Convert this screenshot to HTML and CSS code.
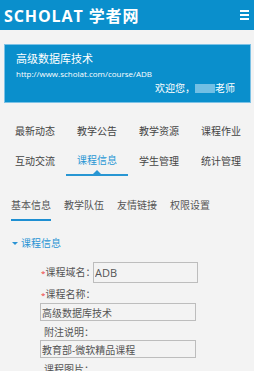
FILE: index.html
```html
<!DOCTYPE html>
<html lang="zh-CN">
<head>
  <meta charset="UTF-8" />
  <meta name="viewport" content="width=device-width, initial-scale=1.0"/>
  <title>课程信息 | SCHOLAT 学者网</title>
  <link rel="stylesheet" href="styles.css">
</head>

<body>
  <header class="topbar">
    <span class="brand">SCHOLAT 学者网</span>
    <span class="menu-btn"><i></i><i></i><i></i></span>
  </header>

  <section class="course-card">
    <h1>高级数据库技术</h1>
    <p class="course-url">http://www.scholat.com/course/ADB</p>
    <p class="welcome">欢迎您，<span class="blur-name"></span>老师</p>
  </section>

  <nav class="course-nav">
    <a href="#">最新动态</a>
    <a href="#">教学公告</a>
    <a href="#">教学资源</a>
    <a href="#">课程作业</a>
    <a href="#">互动交流</a>
    <a href="#" class="active">课程信息</a>
    <a href="#">学生管理</a>
    <a href="#">统计管理</a>
  </nav>

  <div class="sub-tabs">
    <a href="#" class="active">基本信息</a>
    <a href="#">教学队伍</a>
    <a href="#">友情链接</a>
    <a href="#">权限设置</a>
  </div>

  <h2 class="section-title"><span class="caret"></span>课程信息</h2>

  <form class="info-form">
    <div class="inline-row">
      <label class="inline-label"><span class="req">*</span>课程域名：</label>
      <input type="text" class="field short" value="ADB" />
    </div>
    <label class="block-label req-label"><span class="req">*</span>课程名称：</label>
    <input type="text" class="field wide" value="高级数据库技术" />
    <label class="block-label">附注说明：</label>
    <input type="text" class="field wide" value="教育部-微软精品课程" />
    <label class="block-label">课程图片：</label>
  </form>
</body>
</html>
```

FILE: styles.css
```css
* {
  margin: 0;
  padding: 0;
  box-sizing: border-box;
}

body {
  background: #f3f3f3;
  font-family: "Open Sans", "Noto Sans CJK SC", sans-serif;
  color: #444;
  font-size: 10px;
}

a {
  text-decoration: none;
  color: inherit;
}

.topbar {
  height: 30px;
  background: #0a8fcc;
  color: #fff;
  display: flex;
  align-items: center;
  justify-content: space-between;
  padding: 0 5px 0 4px;
}

.brand {
  font-size: 16px;
  font-weight: bold;
  letter-spacing: 0.9px;
}

.menu-btn {
  display: flex;
  flex-direction: column;
  gap: 2px;
  width: 9px;
}

.menu-btn i {
  display: block;
  height: 2px;
  background: #fff;
}

.course-card {
  margin: 14px 3px 0 4px;
  height: 59px;
  background: #0a8fcc;
  border: 1px solid #7cc2e6;
  color: #fff;
  padding: 6px 15px 0 11px;
}

.course-card h1 {
  font-size: 11px;
  font-weight: normal;
  line-height: 16px;
}

.course-url {
  font-size: 8px;
  line-height: 12px;
  margin-top: 1px;
}

.welcome {
  text-align: right;
  font-size: 10px;
  line-height: 14px;
  margin-top: 1px;
}

.blur-name {
  display: inline-block;
  width: 20px;
  height: 9px;
  vertical-align: -1px;
  background: #8ccaea;
  opacity: 0.8;
}

.course-nav {
  margin: 13px 2px 0 4px;
  display: grid;
  grid-template-columns: repeat(4, 62px);
  grid-auto-rows: 30px;
}

.course-nav a {
  text-align: center;
  line-height: 30px;
  color: #444;
  position: relative;
}

.course-nav a.active {
  color: #2896d3;
  border-bottom: 2px solid #2896d3;
  line-height: 28px;
}

.course-nav a.active::after {
  content: "";
  position: absolute;
  left: 27px;
  bottom: 0;
  border-left: 4px solid transparent;
  border-right: 4px solid transparent;
  border-bottom: 4px solid #2896d3;
}

.sub-tabs {
  margin-top: 16px;
  padding-left: 11px;
  display: flex;
  gap: 13px;
}

.sub-tabs a {
  line-height: 27px;
  color: #555;
  border-bottom: 2px solid transparent;
}

.sub-tabs a.active {
  border-bottom-color: #1e8fd2;
}

.section-title {
  margin-top: 14px;
  padding-left: 12px;
  font-size: 10px;
  font-weight: normal;
  line-height: 16px;
  color: #2a93d4;
  display: flex;
  align-items: center;
  gap: 3px;
}

.caret {
  border-left: 3px solid transparent;
  border-right: 3px solid transparent;
  border-top: 3px solid #2a93d4;
}

.info-form {
  margin-top: 11px;
  padding-left: 40px;
  display: flex;
  flex-direction: column;
  align-items: flex-start;
}

.inline-row {
  display: flex;
  align-items: center;
}

.inline-label {
  width: 53px;
  padding-left: 1px;
  line-height: 16px;
  color: #555;
  white-space: nowrap;
}

.req {
  color: #e33;
  font-size: 8px;
}

.block-label {
  margin-top: 3px;
  padding-left: 4px;
  line-height: 16px;
  color: #555;
  white-space: nowrap;
}

.block-label.req-label {
  padding-left: 1px;
}

.field {
  border: 1px solid #bdbdbd;
  background: #f3f3f3;
  font-family: inherit;
  color: #555;
  padding: 0 1px;
  outline: none;
}

.field.short {
  width: 105px;
  height: 21px;
  font-size: 11px;
}

.field.wide {
  width: 156px;
  height: 18px;
  font-size: 10px;
}
```
